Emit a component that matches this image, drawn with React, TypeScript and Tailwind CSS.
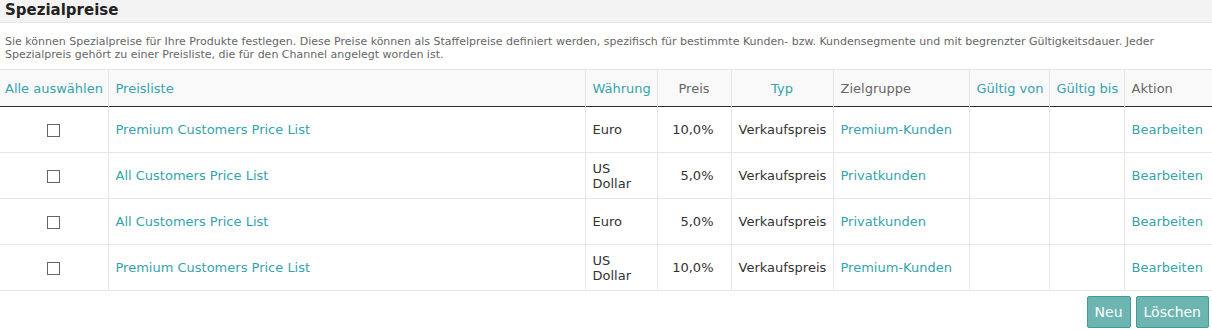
import React from "react";

const teal = "text-[#35a3ad]";

const rows = [
  { list: "Premium Customers Price List", cur: "Euro", price: "10,0%", group: "Premium-Kunden" },
  { list: "All Customers Price List", cur: "US Dollar", price: "5,0%", group: "Privatkunden" },
  { list: "All Customers Price List", cur: "Euro", price: "5,0%", group: "Privatkunden" },
  { list: "Premium Customers Price List", cur: "US Dollar", price: "10,0%", group: "Premium-Kunden" },
];

export default function App() {
  return (
    <div className="w-[1212px] h-[330px] bg-white overflow-hidden text-[#333]" style={{ fontFamily: '"DejaVu Sans", Verdana, sans-serif' }}>
      <div className="h-[23px] bg-[#f3f3f3] border-b border-[#e6e6e6] px-[5px] flex items-center">
        <h1 className="text-[15px] font-bold text-[#222] leading-none -mt-[2px]">Spezialpreise</h1>
      </div>
      <p className="px-[5px] pt-[12px] pb-[7px] text-[11px] leading-[13px] text-[#666] h-[46px]">
        Sie können Spezialpreise für Ihre Produkte festlegen. Diese Preise können als Staffelpreise definiert werden, spezifisch für bestimmte Kunden- bzw. Kundensegmente und mit begrenzter Gültigkeitsdauer. Jeder Spezialpreis gehört zu einer Preisliste, die für den Channel angelegt worden ist.
      </p>
      <table className="table-fixed border-collapse w-[1212px] text-[13px]">
        <colgroup>
          <col className="w-[108px]" />
          <col className="w-[477px]" />
          <col className="w-[72px]" />
          <col className="w-[74px]" />
          <col className="w-[102px]" />
          <col className="w-[136px]" />
          <col className="w-[80px]" />
          <col className="w-[75px]" />
          <col className="w-[88px]" />
        </colgroup>
        <thead>
          <tr className="bg-[#f9f9f9] border-t border-[#e6e6e6] border-b border-b-[#2f2f2f] h-[37px]">
            <th className={`font-normal text-left pl-[5px] pt-[2px] ${teal}`}>Alle auswählen</th>
            <th className={`font-normal text-left pl-[7px] pt-[2px] border-l border-[#e6e6e6] ${teal}`}>Preisliste</th>
            <th className={`font-normal text-left pl-[7px] pt-[2px] border-l border-[#e6e6e6] ${teal}`}>Währung</th>
            <th className="font-normal text-center pt-[2px] border-l border-[#e6e6e6] text-[#666]">Preis</th>
            <th className={`font-normal text-center pt-[2px] border-l border-[#e6e6e6] ${teal}`}>Typ</th>
            <th className="font-normal text-left pl-[7px] pt-[2px] border-l border-[#e6e6e6] text-[#666]">Zielgruppe</th>
            <th className={`font-normal text-left pl-[7px] pt-[2px] border-l border-[#e6e6e6] ${teal}`}>Gültig von</th>
            <th className={`font-normal text-left pl-[7px] pt-[2px] border-l border-[#e6e6e6] ${teal}`}>Gültig bis</th>
            <th className="font-normal text-left pl-[7px] pt-[2px] border-l border-[#e6e6e6] text-[#666]">Aktion</th>
          </tr>
        </thead>
        <tbody>
          {rows.map((r, i) => (
            <tr key={i} className="h-[46px] border-b border-[#e6e6e6]">
              <td className="text-center">
                <span className="inline-block w-[13px] h-[13px] border border-[#666] bg-white align-middle" />
              </td>
              <td className={`pl-[7px] border-l border-[#e6e6e6] ${teal}`}>{r.list}</td>
              <td className="pl-[7px] pr-[4px] border-l border-[#e6e6e6] leading-[15px]">{r.cur}</td>
              <td className="text-right pr-[17px] border-l border-[#e6e6e6]">{r.price}</td>
              <td className="pl-[7px] border-l border-[#e6e6e6] whitespace-nowrap">Verkaufspreis</td>
              <td className={`pl-[7px] border-l border-[#e6e6e6] ${teal}`}>{r.group}</td>
              <td className="border-l border-[#e6e6e6]"></td>
              <td className="border-l border-[#e6e6e6]"></td>
              <td className={`pl-[7px] border-l border-[#e6e6e6] ${teal}`}>Bearbeiten</td>
            </tr>
          ))}
        </tbody>
      </table>
      <div className="flex justify-end gap-[5px] pr-[3px] pt-[5px]">
        <button className="h-[32px] px-[7px] bg-[#6db5b1] border border-[#3c9e99] rounded-[2px] text-white text-[14px]">Neu</button>
        <button className="h-[32px] px-[7px] bg-[#6db5b1] border border-[#3c9e99] rounded-[2px] text-white text-[14px]">Löschen</button>
      </div>
    </div>
  );
}
